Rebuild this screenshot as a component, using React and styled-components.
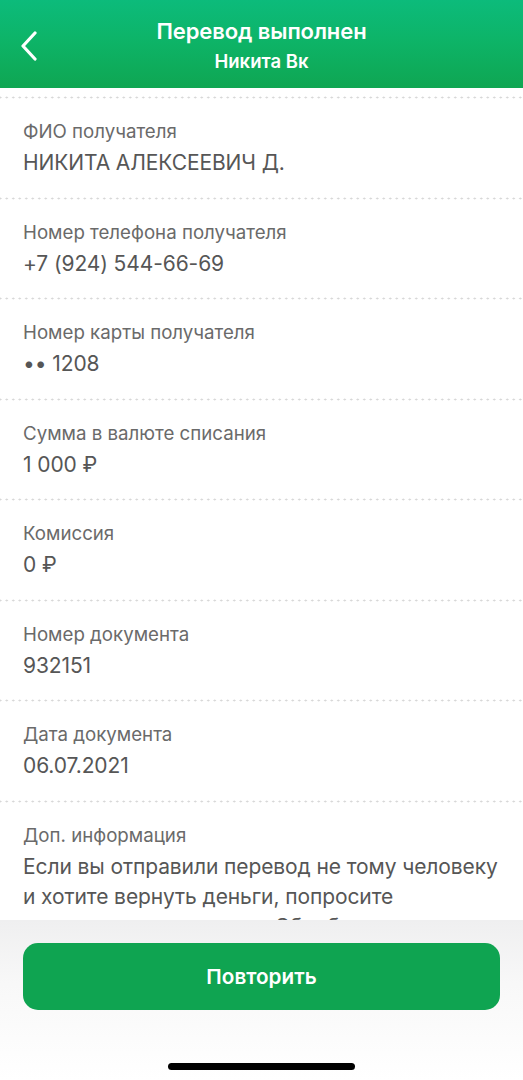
import React from 'react';
import styled, { createGlobalStyle } from 'styled-components';

const GlobalStyle = createGlobalStyle`
  body {
    margin: 0;
    background: #ffffff;
    font-family: Inter, "Noto Sans", sans-serif;
  }
`;

const rows = [
  { label: 'ФИО получателя', value: ['НИКИТА АЛЕКСЕЕВИЧ Д.'] },
  { label: 'Номер телефона получателя', value: ['+7 (924) 544-66-69'] },
  { label: 'Номер карты получателя', value: ['•• 1208'] },
  { label: 'Сумма в валюте списания', value: ['1 000 ₽'] },
  { label: 'Комиссия', value: ['0 ₽'] },
  { label: 'Номер документа', value: ['932151'] },
  { label: 'Дата документа', value: ['06.07.2021'] },
  {
    label: 'Доп. информация',
    value: [
      'Если вы отправили перевод не тому человеку',
      'и хотите вернуть деньги, попросите',
      'получателя позвонить в Сбербанк по номеру',
      '900',
    ],
  },
];

export default function App() {
  return (
    <StyledScreen>
      <GlobalStyle />
      <StyledHeader>
        <StyledBackButton aria-label="Назад">
          <svg width="20" height="30" viewBox="0 0 20 30" fill="none">
            <path
              d="M15 2 L3 15 L15 28"
              stroke="#ffffff"
              strokeWidth="3.2"
              strokeLinecap="round"
              strokeLinejoin="round"
            />
          </svg>
        </StyledBackButton>
        <StyledTitle>Перевод выполнен</StyledTitle>
        <StyledSubtitle>Никита Вк</StyledSubtitle>
      </StyledHeader>

      <StyledContent>
        {rows.map((row) => (
          <StyledRow key={row.label}>
            <StyledLabel>{row.label}</StyledLabel>
            <StyledValue>
              {row.value.map((line) => (
                <StyledLine key={line}>{line}</StyledLine>
              ))}
            </StyledValue>
          </StyledRow>
        ))}
      </StyledContent>

      <StyledFooter>
        <StyledRepeatButton>Повторить</StyledRepeatButton>
        <StyledHomeIndicator />
      </StyledFooter>
    </StyledScreen>
  );
}

const StyledScreen = styled.div`
  height: 1080px;
  display: flex;
  flex-direction: column;
  overflow: hidden;
`;

const StyledHeader = styled.header`
  position: relative;
  height: 88px;
  flex-shrink: 0;
  display: flex;
  flex-direction: column;
  align-items: center;
  justify-content: center;
  gap: 6px;
  padding-top: 2px;
  box-sizing: border-box;
  background: linear-gradient(180deg, #0cbb7b 0%, #0db468 45%, #0fa652 100%);
  color: #ffffff;
`;

const StyledBackButton = styled.button`
  position: absolute;
  left: 20px;
  top: 31px;
  padding: 0;
  border: none;
  background: none;
  display: flex;
`;

const StyledTitle = styled.h1`
  margin: 0;
  font-size: 22px;
  line-height: 26px;
  font-weight: 600;
  letter-spacing: -0.1px;
`;

const StyledSubtitle = styled.div`
  font-size: 18.5px;
  line-height: 22px;
  font-weight: 600;
`;

const StyledContent = styled.main`
  flex: 1;
  overflow: hidden;
  padding-top: 8px;
`;

const StyledRow = styled.section`
  display: flex;
  flex-direction: column;
  gap: 5px;
  padding: 25px 0 0 23px;
  height: 100.5px;
  box-sizing: border-box;
  background-image: radial-gradient(circle, #d6d6d6 0.9px, transparent 1.1px);
  background-size: 6.5px 3px;
  background-position: 23px 0;
  background-repeat: repeat-x;

  &:last-child {
    height: auto;
  }
`;

const StyledLabel = styled.div`
  font-size: 18.7px;
  color: #6a6a6a;
  line-height: 22px;
`;

const StyledValue = styled.div`
  display: flex;
  flex-direction: column;
  font-size: 21px;
  color: #565656;
  line-height: 30px;
  letter-spacing: -0.1px;
`;

const StyledLine = styled.span`
  white-space: nowrap;
`;

const StyledFooter = styled.footer`
  height: 160px;
  flex-shrink: 0;
  display: flex;
  flex-direction: column;
  align-items: center;
  padding: 23px 23px 0 23px;
  box-sizing: border-box;
  background: linear-gradient(180deg, #efeff0 0%, #f8f8f8 40%, #ffffff 100%);
`;

const StyledRepeatButton = styled.button`
  width: 100%;
  height: 67px;
  border: none;
  border-radius: 15px;
  background: #0fa451;
  color: #ffffff;
  font-family: Inter, "Noto Sans", sans-serif;
  font-size: 20.7px;
  font-weight: 600;
`;

const StyledHomeIndicator = styled.div`
  width: 187px;
  height: 7px;
  border-radius: 4px;
  background: #000000;
  margin-top: 53px;
`;
